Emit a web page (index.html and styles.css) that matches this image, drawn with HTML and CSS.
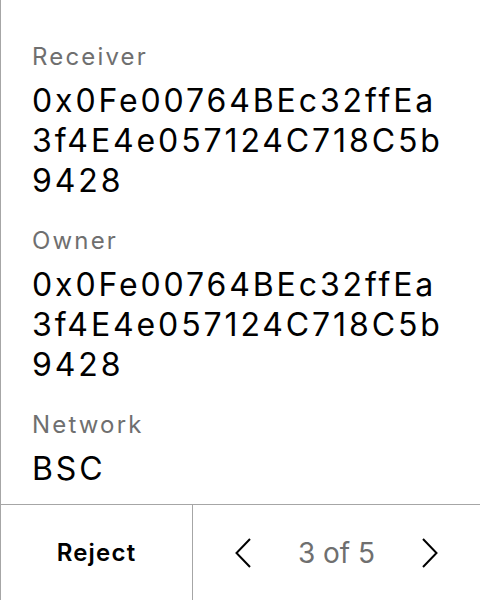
FILE: index.html
```html
<!DOCTYPE html>
<html lang="en">
<head>
<meta charset="utf-8">
<title>Review</title>
<link rel="stylesheet" href="styles.css">
</head>
<body>
<div class="screen">
  <main class="content">
    <section class="field">
      <div class="label">Receiver</div>
      <div class="value">0x0Fe00764BEc32ffEa3f4E4e057124C718C5b9428</div>
    </section>
    <section class="field">
      <div class="label">Owner</div>
      <div class="value">0x0Fe00764BEc32ffEa3f4E4e057124C718C5b9428</div>
    </section>
    <section class="field">
      <div class="label">Network</div>
      <div class="value">BSC</div>
    </section>
  </main>
  <footer class="footer">
    <div class="reject">Reject</div>
    <div class="nav">
      <svg class="chev" width="16" height="30" viewBox="0 0 16 30"><polyline points="15,1 1.5,15 15,29" fill="none" stroke="#000" stroke-width="2"/></svg>
      <span class="page">3 of 5</span>
      <svg class="chev" width="16" height="30" viewBox="0 0 16 30"><polyline points="1,1 14.5,15 1,29" fill="none" stroke="#000" stroke-width="2"/></svg>
    </div>
  </footer>
</div>
</body>
</html>
```

FILE: styles.css
```css
html, body {
  margin: 0;
  padding: 0;
  background: #fff;
}

body {
  font-family: Inter, "Noto Sans", sans-serif;
  font-variant-ligatures: none;
  color: #000;
}

.screen {
  width: 480px;
  height: 600px;
  box-sizing: border-box;
  border-left: 1px solid #a6a6a6;
  display: flex;
  flex-direction: column;
}

.content {
  flex: 1;
  padding: 41px 32px 0 31px;
  display: flex;
  flex-direction: column;
  gap: 24px;
}

.field {
  display: flex;
  flex-direction: column;
  gap: 8px;
}

.label {
  font-size: 24px;
  line-height: 32px;
  letter-spacing: 0.09em;
  color: #6f6f6f;
}

.value {
  font-size: 32px;
  line-height: 40px;
  letter-spacing: 0.09em;
  word-break: break-all;
}

.footer {
  height: 96px;
  box-sizing: border-box;
  border-top: 1px solid #a6a6a6;
  display: flex;
}

.reject {
  width: 192px;
  box-sizing: border-box;
  border-right: 1px solid #a6a6a6;
  display: flex;
  align-items: center;
  justify-content: center;
  font-size: 24px;
  font-weight: 600;
  letter-spacing: 0.05em;
}

.nav {
  flex: 1;
  display: flex;
  align-items: center;
  justify-content: space-between;
  padding: 0 42px;
}

.chev {
  display: block;
}

.page {
  font-size: 28px;
  color: #6f6f6f;
}
```
